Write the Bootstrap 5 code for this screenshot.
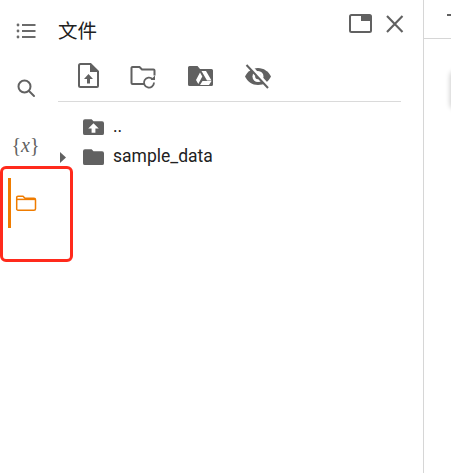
<!DOCTYPE html>
<html lang="zh">
<head>
<meta charset="utf-8">
<title>文件</title>
<link href="https://cdn.jsdelivr.net/npm/bootstrap@5.3.0/dist/css/bootstrap.min.css" rel="stylesheet">
<style>
html,body{height:473px;overflow:hidden;background:#fff}
body{font-family:Roboto,"Noto Sans CJK SC",sans-serif;color:#212121}
.shell{width:451px;height:473px;position:relative}
.rail{width:58px;flex:none}
.rail-slot{height:57px;width:51px}
.rail-slot svg{display:block}
.rail-first{height:59px}
.var-mark{font-family:"Liberation Serif",serif;font-size:20px;color:#616161;line-height:1}
.panel{width:343px;flex:none}
.panel-head{height:60px;padding-top:14px}
.panel-title{font-size:19.5px;line-height:24px;margin-top:4px;font-family:"Noto Sans CJK SC",sans-serif;color:#212121}
.head-tools{width:57px;margin-right:-4px;gap:12px}
.head-tools svg{flex:none}
.tools{height:42px;border-bottom:1px solid #dadada;padding-left:20px;padding-top:3px;gap:31px}
.tools svg{flex:none}
.tree-row{height:30px;font-size:17.5px;line-height:28px;color:#212121}
.tree-arrow{width:25px;flex:none}
.tree-tip{margin-left:2px}
.tree-name{margin-left:9px;margin-bottom:2px}
.tree-first{margin-top:10px}
.gutter{width:22px;flex:none}
.main-area{flex:1;border-left:1px solid #d6d6d6;position:relative;overflow:hidden}
.main-top{height:39px;border-bottom:1px solid #d6d6d6}
.main-dash{width:5px;height:2px;background:#616161;position:absolute;left:23px;top:14px}
.main-shadow{position:absolute;left:27px;top:72px;width:30px;height:36px;background:#fff;border-radius:4px;box-shadow:0 0 5px 1px rgba(0,0,0,.2)}
.active-bar{position:absolute;left:8px;top:178px;width:3px;height:50px;background:#ef7c00}
.red-box{position:absolute;left:0;top:166px;width:73px;height:96px;border:3px solid #ff2a1c;border-radius:6px;pointer-events:none}
</style>
</head>
<body>
<div class="shell d-flex">
  <div class="rail d-flex flex-column">
    <div class="rail-slot rail-first d-flex align-items-center justify-content-center">
      <svg width="22" height="22" viewBox="0 0 22 22" fill="#6b6b6b"><circle cx="3" cy="6" r="1.400"/><circle cx="3" cy="12" r="1.400"/><circle cx="3" cy="18" r="1.400"/><rect x="7" y="5" width="13.500" height="2"/><rect x="7" y="11" width="13.500" height="2"/><rect x="7" y="17" width="13.500" height="2"/></svg>
    </div>
    <div class="rail-slot d-flex align-items-center justify-content-center">
      <svg width="22" height="22" viewBox="0 0 22 22" fill="none" stroke="#616161" stroke-width="2"><circle cx="9.500" cy="9.500" r="6"/><path d="M14 14l5 5" stroke-linecap="round"/></svg>
    </div>
    <div class="rail-slot d-flex align-items-center justify-content-center"><span class="var-mark">{<i>x</i>}</span></div>
    <div class="rail-slot d-flex align-items-center justify-content-center">
      <svg width="22" height="22" viewBox="0 0 22 22" fill="none" stroke="#ef7c00" stroke-width="1.500"><path d="M1.700 6.500a1.300 1.300 0 0 1 1.300-1.300h5l2 2h9a1.500 1.500 0 0 1 1.500 1.500v9a1.500 1.500 0 0 1-1.500 1.500H3a1.300 1.300 0 0 1-1.300-1.300z"/><path d="M2 8.400h18"/></svg>
    </div>
  </div>

  <div class="panel d-flex flex-column">
    <div class="panel-head d-flex justify-content-between">
      <div class="panel-title">文件</div>
      <div class="head-tools d-flex align-items-start">
        <svg width="25" height="20" viewBox="0 0 25 20" fill="none"><rect x="2" y="1" width="21" height="17" rx="1.500" stroke="#616161" stroke-width="2"/><rect x="13" y="1" width="10" height="6" fill="#616161"/></svg>
        <svg width="20" height="20" viewBox="0 0 20 20" fill="none" stroke="#616161" stroke-width="2.100"><path d="M2 2l15.500 16M17.500 2L2 18"/></svg>
      </div>
    </div>
    <div class="tools d-flex align-items-start">
      <svg width="21" height="28" viewBox="0 0 21 28" fill="none"><path d="M2.500 1h10l7.500 7.500V23a1 1 0 0 1-1 1H2.500a1.500 1.500 0 0 1-1.500-1.500V2.500A1.500 1.500 0 0 1 2.500 1z" stroke="#616161" stroke-width="2"/><path d="M12 1v8h8z" fill="#616161"/><path d="M10.500 11l4.500 5h-3v4.500H9V16H6z" fill="#616161"/></svg>
      <svg width="26" height="28" viewBox="0 0 26 28" fill="none"><path d="M14 21H2.500a1 1 0 0 1-1-1V5a1 1 0 0 1 1-1h7L12 6.500h11.500a1 1 0 0 1 1 1v5" stroke="#616161" stroke-width="2"/><path d="M24 19.500a5 5 0 1 1-1.500-3.500" stroke="#616161" stroke-width="1.800"/><path d="M25 12.500V17h-4.500z" fill="#616161"/></svg>
      <svg width="26" height="28" viewBox="0 0 26 28"><path fill="#616161" d="M2.500 3h8l2.500 3h11.500a1.500 1.500 0 0 1 1.500 1.500v14a1.500 1.500 0 0 1-1.500 1.500h-22a1.500 1.500 0 0 1-1.500-1.500V4.500A1.500 1.500 0 0 1 2.500 3z"/><path fill="#fff" d="M14.500 8h4.500l5.500 9.500h-4.500zM13 9.500l2.300 4-4 7.500L9 17zM15.500 18h9l-2.500 4H13z"/></svg>
      <svg width="28" height="28" viewBox="0 0 28 28"><path fill="#616161" d="M14 5c5.800 0 10.500 3.500 13 8.500-2.500 5-7.200 8.500-13 8.500S3.500 18.500 1 13.500C3.500 8.500 8.200 5 14 5z"/><circle cx="14" cy="13.500" r="5.500" fill="#fff"/><circle cx="14" cy="13.500" r="2.800" fill="#616161"/><path d="M4 1l21 23" stroke="#fff" stroke-width="4"/><path d="M2.500 2l21.500 23" stroke="#616161" stroke-width="2"/></svg>
    </div>
    <div class="tree-first tree-row d-flex align-items-center">
      <span class="tree-arrow"></span>
      <svg width="21" height="18" viewBox="0 0 22 18"><path fill="#616161" d="M2 1h7l2 2h9a2 2 0 0 1 2 2v10.500a2 2 0 0 1-2 2H2a2 2 0 0 1-2-2V3a2 2 0 0 1 2-2z"/><path fill="#fff" d="M11 5l5.500 5.500H13V15H9v-4.500H5.500z"/></svg>
      <span class="tree-name">..</span>
    </div>
    <div class="tree-row d-flex align-items-center">
      <span class="tree-arrow d-flex"><svg class="tree-tip" width="6" height="11" viewBox="0 0 6 11"><path fill="#616161" d="M0 0l6 5.500-6 5.500z"/></svg></span>
      <svg width="21" height="18" viewBox="0 0 22 18"><path fill="#616161" d="M2 1h7l2 2h9a2 2 0 0 1 2 2v10.500a2 2 0 0 1-2 2H2a2 2 0 0 1-2-2V3a2 2 0 0 1 2-2z"/></svg>
      <span class="tree-name">sample_data</span>
    </div>
  </div>

  <div class="gutter"></div>
  <div class="main-area">
    <div class="main-top"></div>
    <div class="main-dash"></div>
    <div class="main-shadow"></div>
  </div>

  <div class="active-bar"></div>
  <div class="red-box"></div>
</div>
</body>
</html>
